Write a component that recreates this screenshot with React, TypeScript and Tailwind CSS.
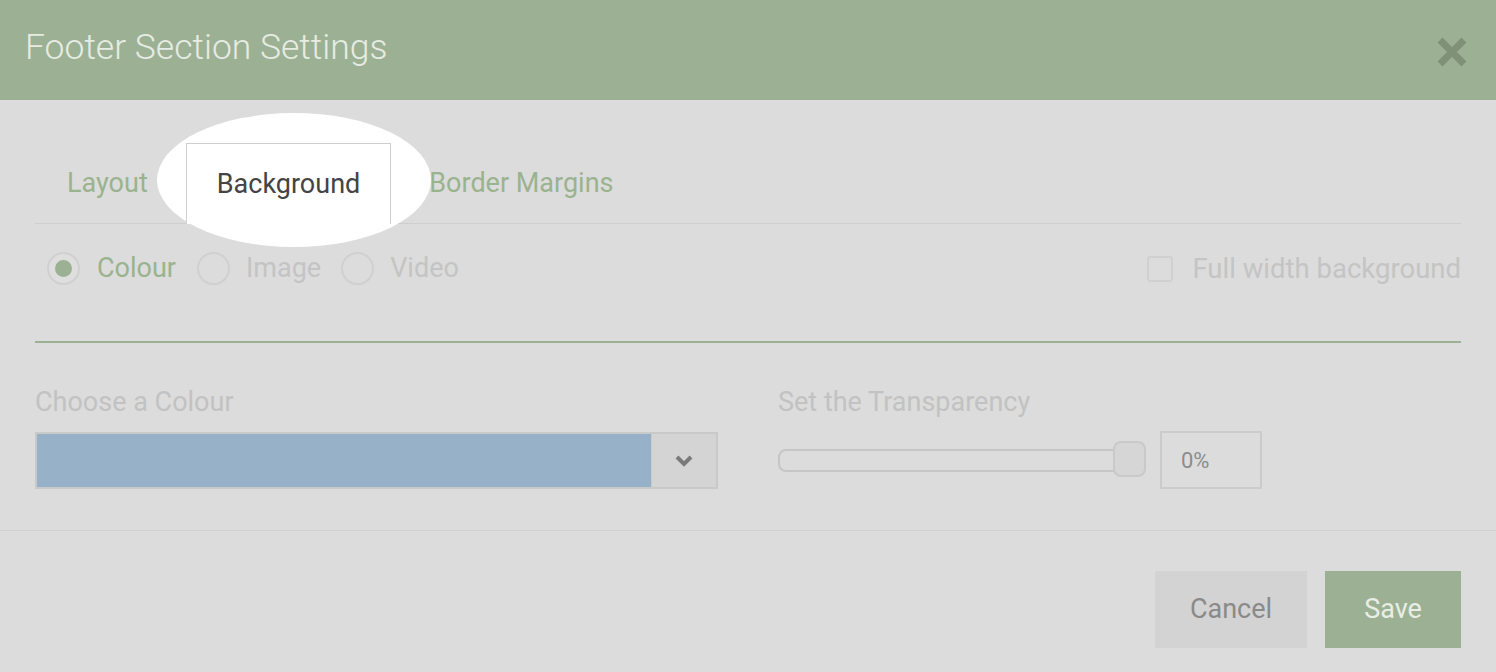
export default function App() {
  return (
    <div className="w-[1496px] h-[672px] bg-[#dcdcdc] font-['Roboto',sans-serif] overflow-hidden">
      {/* Header */}
      <div className="h-[100px] bg-[#9cb193] flex items-center justify-between pl-[25px] pr-[28px]">
        <h1 className="text-[35.5px] font-light text-[#e6ece3] leading-none mb-[5px]">Footer Section Settings</h1>
        <svg width="32" height="32" viewBox="0 0 32 32" className="mt-[4px]">
          <path d="M4 4 L28 28 M28 4 L4 28" stroke="#7f9278" strokeWidth="7" strokeLinecap="butt" />
        </svg>
      </div>

      {/* Body */}
      <div className="border-b border-[#d0d0d0] px-[35px] pt-[43px] h-[431px]">
        {/* Tabs */}
        <div className="relative flex items-end gap-[8px] pl-[2px] border-b border-[#cfcfcf] h-[81px]">
          <div className="absolute left-[122px] top-[-30px] w-[274px] h-[134px] rounded-[50%] bg-white" />
          <div className="h-[80px] px-[30px] flex items-center text-[27px] text-[#9ab38f]">Layout</div>
          <div className="relative z-10 h-[81px] -mb-[1px] px-[30px] flex items-center bg-white border border-b-0 border-[#cfcfcf] text-[27px] text-[#444]">
            Background
          </div>
          <div className="relative h-[80px] px-[30px] flex items-center text-[27px] text-[#9ab38f]">Border Margins</div>
        </div>

        {/* Type options */}
        <div className="flex items-center justify-between mt-[28px] h-[33px]">
          <div className="flex items-center pl-[12px] text-[27px]">
            <span className="w-[33px] h-[33px] rounded-full border-2 border-[#d0d0d0] bg-[#dedede] flex items-center justify-center">
              <span className="w-[17px] h-[17px] rounded-full bg-[#9cb193]" />
            </span>
            <span className="ml-[17px] text-[#9ab38f]">Colour</span>
            <span className="ml-[21px] w-[33px] h-[33px] rounded-full border-2 border-[#d0d0d0]" />
            <span className="ml-[16px] text-[#c4c4c4]">Image</span>
            <span className="ml-[20px] w-[33px] h-[33px] rounded-full border-2 border-[#d0d0d0]" />
            <span className="ml-[16px] text-[#c4c4c4]">Video</span>
          </div>
          <div className="flex items-center text-[27.5px] text-[#c4c4c4]">
            <span className="w-[26px] h-[26px] rounded-[3px] border-2 border-[#d0d0d0]" />
            <span className="ml-[19px]">Full width background</span>
          </div>
        </div>

        <div className="mt-[56px] h-[2px] bg-[#9cb193]" />

        {/* Colour + transparency */}
        <div className="flex mt-[43px]">
          <div className="w-[683px]">
            <div className="text-[27px] leading-[32px] text-[#c2c2c2]">Choose a Colour</div>
            <div className="mt-[14px] h-[57px] flex border-2 border-[#c9c9c9]">
              <div className="flex-1 bg-[#97b1c8]" />
              <div className="w-[65px] bg-[#d4d4d4] border-l border-[#cacaca] flex items-center justify-center">
                <svg width="18" height="12" viewBox="0 0 18 12">
                  <path d="M2 2 L9 9 L16 2" fill="none" stroke="#7a7a7a" strokeWidth="4" />
                </svg>
              </div>
            </div>
          </div>
          <div className="ml-[60px]">
            <div className="text-[27px] leading-[32px] text-[#c2c2c2]">Set the Transparency</div>
            <div className="mt-[13px] flex items-center">
              <div className="relative w-[368px] h-[58px] flex items-center">
                <div className="w-[345px] h-[23px] rounded-[8px] border-2 border-[#c6c6c6]" />
                <div className="absolute left-[335px] top-[10px] w-[33px] h-[36px] rounded-[8px] border-2 border-[#c9c9c9] bg-[#d6d6d6]" />
              </div>
              <div className="ml-[14px] w-[102px] h-[58px] border-2 border-[#cbcbcb] flex items-center pl-[19px] text-[22px] text-[#8c8c8c]">
                0%
              </div>
            </div>
          </div>
        </div>
      </div>

      {/* Footer */}
      <div className="flex justify-end gap-[18px] pr-[35px] pt-[40px]">
        <button className="w-[152px] h-[77px] bg-[#d3d3d3] text-[27px] text-[#8a8a8a]">Cancel</button>
        <button className="w-[136px] h-[77px] bg-[#9cb193] text-[27px] text-[#e8eee5]">Save</button>
      </div>
    </div>
  );
}
